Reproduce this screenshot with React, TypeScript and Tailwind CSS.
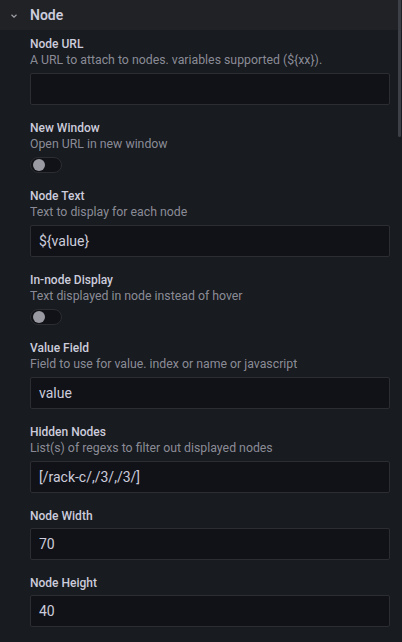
import React from "react";

type FieldProps = {
  label: string;
  description?: string;
  children: React.ReactNode;
};

function Field({ label, description, children }: FieldProps) {
  return (
    <div className="mb-[15px]">
      <div className="text-[12px] leading-[16px] font-medium text-[#ccccdc]">{label}</div>
      {description && (
        <div className="text-[12.3px] leading-[17px] text-[rgba(204,204,220,0.65)]">{description}</div>
      )}
      <div className="mt-[4px]">{children}</div>
    </div>
  );
}

function Input({ value }: { value?: string }) {
  return (
    <div className="h-[32px] w-full rounded-[2px] border border-[#2b2d33] bg-[#111217] px-[8px] flex items-center text-[14px] text-[#ccccdc]">
      {value}
    </div>
  );
}

function Switch() {
  return (
    <div className="h-[16px] w-[32px] rounded-full border border-[#2b2d33] bg-[#111217] relative">
      <div className="absolute left-[2px] top-[1px] h-[12px] w-[12px] rounded-full bg-[#9a9aa2]" />
    </div>
  );
}

export default function App() {
  return (
    <div
      className="relative w-[402px] h-[642px] overflow-hidden bg-[#181b1f]"
      style={{ fontFamily: "Roboto, 'Liberation Sans', sans-serif" }}
    >
      <div className="h-[30px] bg-[#202226] flex items-center">
        <div className="w-[30px] flex justify-center pr-[3px]">
          <svg width="8" height="6" viewBox="0 0 8 6" className="mt-[1px]">
            <path d="M1.5 1.8 L4 4.2 L6.5 1.8" fill="none" stroke="#9fa1a8" strokeWidth="1.2" />
          </svg>
        </div>
        <div className="text-[14px] font-semibold text-[#ccccdc] leading-none">Node</div>
      </div>
      <div className="pl-[30px] pr-[12px] pt-[6px]">
        <Field label="Node URL" description="A URL to attach to nodes. variables supported (${xx}).">
          <Input />
        </Field>
        <Field label="New Window" description="Open URL in new window">
          <Switch />
        </Field>
        <Field label="Node Text" description="Text to display for each node">
          <Input value="${value}" />
        </Field>
        <Field label="In-node Display" description="Text displayed in node instead of hover">
          <Switch />
        </Field>
        <Field label="Value Field" description="Field to use for value. index or name or javascript">
          <Input value="value" />
        </Field>
        <Field label="Hidden Nodes" description="List(s) of regexs to filter out displayed nodes">
          <Input value="[/rack-c/,/3/,/3/]" />
        </Field>
        <Field label="Node Width">
          <Input value="70" />
        </Field>
        <Field label="Node Height">
          <Input value="40" />
        </Field>
      </div>
      <div className="absolute right-[1px] top-0 w-[3px] h-[137px] rounded-b-full bg-[#3d4046]" />
    </div>
  );
}
